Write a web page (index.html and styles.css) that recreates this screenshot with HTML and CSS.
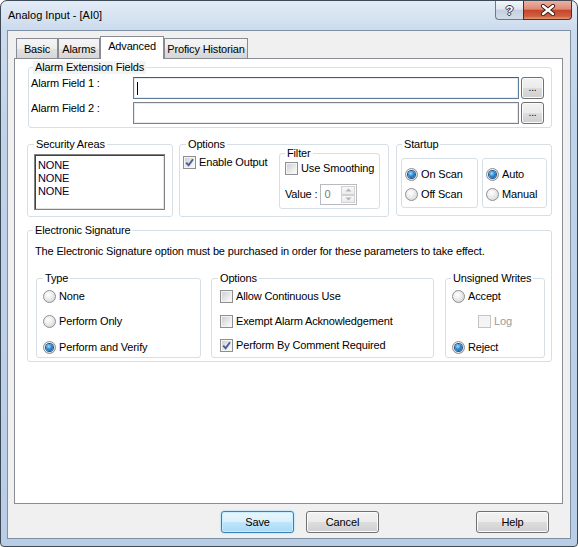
FILE: index.html
```html
<!DOCTYPE html>
<html>
<head>
<meta charset="utf-8">
<link rel="stylesheet" href="styles.css">
</head>
<body>
<div class="window">
  <div class="titlebar">
    <span class="title">Analog Input - [AI0]</span>
    <div class="caption">
      <div class="cbtn cbtn-help">?</div>
      <div class="cbtn cbtn-close">
        <svg width="16" height="12" viewBox="0 0 16 12"><path d="M3 2 L13 10 M13 2 L3 10" stroke="#3b1a14" stroke-width="4.2" stroke-linecap="round"/><path d="M3 2 L13 10 M13 2 L3 10" stroke="#fff" stroke-width="2.4" stroke-linecap="round"/></svg>
      </div>
    </div>
  </div>
  <div class="client">
    <div class="tabs">
      <div class="tab t-basic">Basic</div>
      <div class="tab t-alarms">Alarms</div>
      <div class="tab t-adv sel">Advanced</div>
      <div class="tab t-hist">Proficy Historian</div>
    </div>
    <div class="panel">
      <fieldset class="grp ext">
        <legend>Alarm Extension Fields</legend>
        <div class="frow">
          <span class="flabel">Alarm Field 1 :</span>
          <div class="field focus"><span class="caret"></span></div>
          <div class="btn dots">...</div>
        </div>
        <div class="frow r2">
          <span class="flabel">Alarm Field 2 :</span>
          <div class="field"></div>
          <div class="btn dots">...</div>
        </div>
      </fieldset>

      <div class="row2">
        <fieldset class="grp sec">
          <legend>Security Areas</legend>
          <div class="listbox">
            <div>NONE</div>
            <div>NONE</div>
            <div>NONE</div>
          </div>
        </fieldset>
        <fieldset class="grp opts">
          <legend>Options</legend>
          <div class="opts-in">
            <div class="item en-out"><span class="cb"><svg width="9" height="9" viewBox="0 0 9 9"><path d="M1.2 4.6 L3.6 7.2 L8 1.2" fill="none" stroke="#4a5e96" stroke-width="1.9"/></svg></span>Enable Output</div>
            <fieldset class="grp filter">
              <legend>Filter</legend>
              <div class="item"><span class="cb"></span>Use Smoothing</div>
              <div class="valrow">
                <span>Value :</span>
                <div class="spin">
                  <span class="spin-val">0</span>
                  <div class="spin-btns">
                    <div class="sb"><svg width="7" height="4" viewBox="0 0 7 4"><path d="M0.5 3.5 L3.5 0.5 L6.5 3.5Z" fill="#b4b4b4"/></svg></div>
                    <div class="sb"><svg width="7" height="4" viewBox="0 0 7 4"><path d="M0.5 0.5 L3.5 3.5 L6.5 0.5Z" fill="#b4b4b4"/></svg></div>
                  </div>
                </div>
              </div>
            </fieldset>
          </div>
        </fieldset>
        <fieldset class="grp startup">
          <legend>Startup</legend>
          <div class="st-in">
            <div class="subbox sb1">
              <div class="item"><span class="rb on"></span>On Scan</div>
              <div class="item"><span class="rb"></span>Off Scan</div>
            </div>
            <div class="subbox sb2">
              <div class="item"><span class="rb on"></span>Auto</div>
              <div class="item"><span class="rb"></span>Manual</div>
            </div>
          </div>
        </fieldset>
      </div>

      <fieldset class="grp esig">
        <legend>Electronic Signature</legend>
        <div class="esig-text">The Electronic Signature option must be purchased in order for these parameters to take effect.</div>
        <div class="esig-row">
          <fieldset class="grp type">
            <legend>Type</legend>
            <div class="col">
              <div class="item"><span class="rb"></span>None</div>
              <div class="item g12b"><span class="rb"></span>Perform Only</div>
              <div class="item g13"><span class="rb on"></span>Perform and Verify</div>
            </div>
          </fieldset>
          <fieldset class="grp eopts">
            <legend>Options</legend>
            <div class="col">
              <div class="item"><span class="cb"></span>Allow Continuous Use</div>
              <div class="item g12b"><span class="cb"></span>Exempt Alarm Acknowledgement</div>
              <div class="item g11"><span class="cb"><svg width="9" height="9" viewBox="0 0 9 9"><path d="M1.2 4.6 L3.6 7.2 L8 1.2" fill="none" stroke="#4a5e96" stroke-width="1.9"/></svg></span>Perform By Comment Required</div>
            </div>
          </fieldset>
          <fieldset class="grp unsigned">
            <legend>Unsigned Writes</legend>
            <div class="col">
              <div class="item"><span class="rb"></span>Accept</div>
              <div class="item g12b log"><span class="cb dis"></span>Log</div>
              <div class="item g13"><span class="rb on"></span>Reject</div>
            </div>
          </fieldset>
        </div>
      </fieldset>
    </div>
    <div class="buttons">
      <div class="btn push def">Save</div>
      <div class="btn push cancel">Cancel</div>
      <div class="btn push helpb">Help</div>
    </div>
  </div>
</div>
</body>
</html>
```
FILE: styles.css
```css
* { box-sizing: border-box; }
html, body { margin: 0; padding: 0; background: #ffffff; }
body {
  font-family: "Liberation Sans", Arial, sans-serif;
  font-size: 11px;
  line-height: 13px;
  letter-spacing: -0.15px;
  color: #000;
}

.window {
  width: 578px;
  height: 547px;
  border: 1px solid #3e4957;
  border-radius: 7px 7px 4px 4px;
  background: linear-gradient(to bottom, #e3ecf6 0px, #ccdcee 28px, #c0d3e9 120px, #b9cde6 100%);
  display: flex;
  flex-direction: column;
  overflow: hidden;
}

.titlebar {
  height: 29px;
  flex: none;
  display: flex;
  align-items: flex-start;
}
.title {
  margin: 8px 0 0 7px;
  font-size: 11px;
  line-height: 13px;
  letter-spacing: 0;
  color: #000;
}
.caption {
  margin-left: auto;
  margin-right: 5px;
  display: flex;
}
.cbtn {
  height: 19px;
  display: flex;
  align-items: center;
  justify-content: center;
}
.cbtn-help {
  width: 28px;
  border: 1px solid #6c7a8c;
  border-top: none;
  border-right: none;
  border-radius: 0 0 0 4px;
  background: linear-gradient(to bottom, #f3f6fa 0%, #dfe6ef 45%, #c4d0de 50%, #d3dde9 100%);
  color: #fff;
  font-weight: bold;
  font-size: 13px;
  text-shadow: 1px 0 0 #2f3a48, -1px 0 0 #2f3a48, 0 1px 0 #2f3a48, 0 -1px 0 #2f3a48;
}
.cbtn-close {
  width: 49px;
  border: 1px solid #5a2a21;
  border-top: none;
  border-radius: 0 0 4px 0;
  background: linear-gradient(to bottom, #eab1a4 0%, #df8a76 45%, #c5462d 52%, #d0603f 85%, #e39a78 100%);
}

.client {
  margin: 0 6px;
  height: 509px;
  border: 1px solid #7f90a5;
  background: #f0f0f0;
  flex: none;
}

.tabs {
  display: flex;
  align-items: flex-end;
  height: 22px;
  margin: 5px 0 0 8px;
}
.tab {
  height: 20px;
  border: 1px solid #898c95;
  border-bottom: none;
  background: linear-gradient(to bottom, #f5f5f5 0%, #ededed 50%, #e2e2e2 51%, #d6d6d6 100%);
  display: flex;
  align-items: center;
  justify-content: center;
  padding-top: 1px;
}
.t-basic { width: 42px; }
.t-alarms { width: 42px; }
.t-adv { width: 64px; }
.t-hist { width: 84px; }
.tab.sel {
  height: 23px;
  margin-bottom: -1px;
  background: #ffffff;
  position: relative;
  z-index: 1;
  padding-top: 0;
  padding-bottom: 3px;
}

.panel {
  margin-left: 6px;
  width: 549px;
  height: 446px;
  background: #ffffff;
  border: 1px solid #898c95;
  padding: 2px 0 0 12px;
}

.grp {
  margin: 0;
  min-width: 0;
  border: 1px solid #d5dfe5;
  border-radius: 3px;
}
.grp legend {
  padding: 0 2px;
  margin-left: 3px;
  line-height: 13px;
  font-size: 11px;
}

/* Alarm extension */
.ext {
  margin-left: 1px;
  width: 524px;
  padding: 3px 7px 3px 2px;
}
.ext legend { background: #f3f3f3; margin-left: 2px; }
.frow {
  display: flex;
  align-items: flex-start;
  height: 22px;
}
.frow.r2 { margin-top: 3px; }
.flabel { width: 102px; line-height: 13px; padding-top: 0; }
.field {
  width: 386px;
  height: 22px;
  border: 1px solid #7e8186;
  box-shadow: inset 0 0 0 1px #e7ebf0;
  background: #fff;
  position: relative;
}
.field.focus { border-color: #5f7e9c; border-top-color: #3f5f80; }
.caret {
  position: absolute;
  left: 3px;
  top: 4px;
  width: 1px;
  height: 13px;
  background: #000;
}
.btn {
  display: flex;
  align-items: center;
  justify-content: center;
  border: 1px solid #707070;
  border-radius: 3px;
  background: linear-gradient(to bottom, #f2f2f2 0%, #ebebeb 50%, #dddddd 51%, #cfcfcf 100%);
  box-shadow: inset 0 0 0 1px #fbfbfb;
}
.dots {
  margin-left: 2px;
  width: 23px;
  height: 22px;
  padding-bottom: 2px;
  font-size: 10px;
}

/* row 2 */
.row2 {
  display: flex;
  margin-top: 10px;
  align-items: flex-start;
}
.sec {
  width: 146px;
  padding: 3px 6px 6px 6px;
}
.sec legend { margin-left: 0; }
.listbox {
  width: 131px;
  height: 56px;
  border: 1px solid #828282;
  box-shadow: inset 1px 1px 0 #404040, inset -1px -1px 0 #e3e3e3;
  background: #fff;
  padding: 4px 0 0 3px;
  color: #000033;
  line-height: 13px;
}
.opts {
  margin-left: 6px;
  width: 210px;
  padding: 0 8px 7px 3px;
}
.opts-in {
  display: flex;
  align-items: flex-start;
}
.item {
  display: flex;
  align-items: center;
  height: 13px;
  white-space: nowrap;
}
.en-out { margin-top: 5px; }
.cb {
  width: 13px;
  height: 13px;
  flex: none;
  margin-right: 3px;
  border: 1px solid #8e8f8f;
  padding: 1px;
  background: linear-gradient(135deg, #cdd0d5 0%, #eeeeee 70%, #fbfbfb 100%) content-box, #f4f4f4;
  display: flex;
  align-items: center;
  justify-content: center;
}
.cb svg { display: block; }
.cb.dis {
  border-color: #c4c4c4;
  background: #f4f4f4;
}
.filter {
  margin-left: auto;
  margin-top: -4px;
  width: 101px;
  padding: 2px 4px 3px 5px;
}
.filter legend { margin-left: 0; }
.valrow {
  display: flex;
  align-items: center;
  margin-top: 9px;
  height: 21px;
}
.spin {
  margin-left: 3px;
  width: 37px;
  height: 21px;
  border: 1px solid #b7babe;
  background: #fff;
  display: flex;
  align-items: stretch;
}
.spin-val {
  flex: 1;
  color: #7a7a7a;
  padding: 3px 0 0 3px;
}
.spin-btns {
  width: 15px;
  display: flex;
  flex-direction: column;
  padding: 1px 1px 1px 0;
}
.sb {
  flex: 1;
  border: 1px solid #d2d2d2;
  background: linear-gradient(to bottom, #f7f7f7, #ececec);
  display: flex;
  align-items: center;
  justify-content: center;
}
.startup {
  margin-left: 7px;
  width: 156px;
  padding: 7px 4px 7px 4px;
}
.startup legend { margin-left: 1px; }
.st-in { display: flex; }
.subbox {
  height: 50px;
  border: 1px solid #d5dfe5;
  border-radius: 3px;
  padding: 9px 0 0 3px;
  display: flex;
  flex-direction: column;
  gap: 7px;
}
.sb1 { width: 77px; }
.sb2 { width: 65px; margin-left: 4px; }
.rb {
  width: 13px;
  height: 13px;
  flex: none;
  margin-right: 3px;
  border-radius: 50%;
  border: 1px solid #8e8f8f;
  background: radial-gradient(circle at 40% 35%, #ffffff 0%, #f0f0f0 35%, #cfcfcf 100%);
  display: flex;
  align-items: center;
  justify-content: center;
}
.rb.on::after {
  content: "";
  width: 7px;
  height: 7px;
  border-radius: 50%;
  background: radial-gradient(circle at 40% 35%, #9fe0ff 0%, #2a8ad8 45%, #0f4b93 100%);
  box-shadow: 0 0 0 1px #27507d;
}

/* electronic signature */
.esig {
  width: 525px;
  margin-top: 7px;
  padding: 0 6px 3px 8px;
}
.esig > legend { margin-left: -3px; }
.esig-text {
  margin-top: 8px;
  margin-left: -1px;
  white-space: nowrap;
}
.esig-row {
  display: flex;
  margin-top: 14px;
  align-items: flex-start;
}
.col {
  display: flex;
  flex-direction: column;
}
.g12b { margin-top: 12px; }
.g13 { margin-top: 13px; }
.g11 { margin-top: 11px; }
.type {
  width: 165px;
  padding: 5px 4px 3px 6px;
}
.type legend { margin-left: 0; }
.eopts {
  width: 223px;
  margin-left: 10px;
  padding: 5px 4px 5px 8px;
}
.eopts legend { margin-left: -2px; }
.unsigned {
  width: 100px;
  margin-left: 11px;
  padding: 5px 4px 3px 6px;
}
.unsigned legend { margin-left: -1px; }
.log {
  margin-left: 26px;
  color: #9a9a9a;
}

/* buttons */
.buttons {
  display: flex;
  margin-top: 7px;
  padding-left: 213px;
}
.push {
  width: 73px;
  height: 22px;
}
.def {
  border-color: #3c7fb1;
  background: linear-gradient(to bottom, #eaf6fd 0%, #d9f0fc 50%, #bee6fd 51%, #a7d9f5 100%);
  box-shadow: inset 0 0 0 1px #c9ecff, 0 0 2px #7fd3ff;
}
.cancel { margin-left: 12px; }
.helpb { margin-left: 97px; }
```
